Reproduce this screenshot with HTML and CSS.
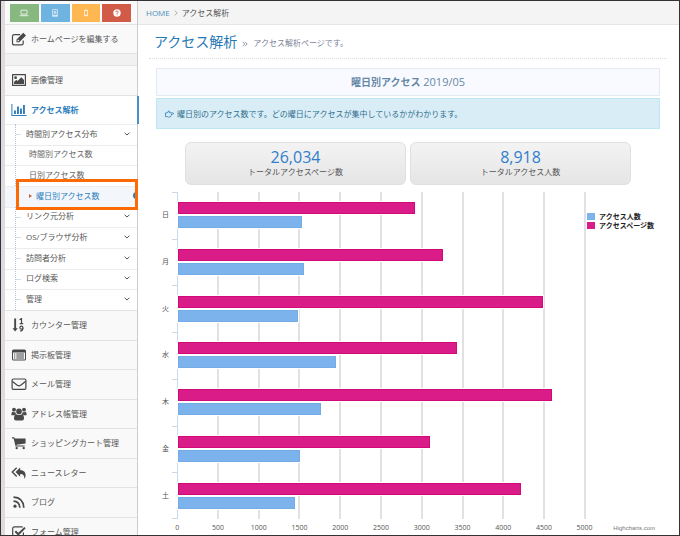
FILE: index.html
```html
<!DOCTYPE html>
<html lang="ja">
<head>
<meta charset="utf-8">
<meta name="viewport" content="width=device-width, initial-scale=1">
<title>アクセス解析</title>
<link rel="stylesheet" href="styles.css">
</head>
<body>
<svg class="defs" aria-hidden="true">
  <symbol id="chevron" viewBox="0 0 6 4"><path d="M.6.8 3 3 5.4.8" fill="none" stroke="currentColor" stroke-width="1"/></symbol>
</svg>
<aside class="sidebar">
  <div class="shortcuts">
    <button class="shortcut green" type="button" aria-label="PC"><svg viewBox="0 0 10 8"><path d="M2 1.2h6v4H2z" fill="none" stroke="currentColor" stroke-width=".9"/><path d="M.6 6.2h8.8v1H.6z"/></svg></button>
    <button class="shortcut blue" type="button" aria-label="タブレット"><svg viewBox="0 0 10 8"><path d="M2.3.9q0-.6.6-.6h4.2q.6 0 .6.6v6.2q0 .6-.6.6H2.9q-.6 0-.6-.6zM3.1 1.1v5h3.8v-5zM4.6 6.5v.7h.8v-.7z" fill-rule="evenodd"/><path d="M3.7 2h2.6v.7H3.7zM3.7 3.3h2.6V4H3.7zM3.7 4.6h2.6v.7H3.7z"/></svg></button>
    <button class="shortcut orange" type="button" aria-label="スマートフォン"><svg viewBox="0 0 10 8"><path d="M3.1 1.4q0-.6.6-.6h2.6q.6 0 .6.6v5.2q0 .6-.6.6H3.7q-.6 0-.6-.6zM3.9 1.9v3.8h2.2V1.9z" fill-rule="evenodd"/></svg></button>
    <button class="shortcut red" type="button" aria-label="ヘルプ"><svg viewBox="0 0 10 8"><circle cx="5" cy="4" r="3.7"/><path class="mark" d="M3.7 3.1Q3.8 2 5 2t1.2 1Q6.200 3.600 5.500 3.900 5 4.200 5 4.800M5 5.300v1" fill="none" stroke-width=".9"/></svg></button>
  </div>
  <nav>
    <ul class="menu menu-edit">
      <li><a href="#"><svg class="icon" viewBox="0 0 16 14"><path d="M12.200 8.400v2.800q0 1.700-1.700 1.700H3.200q-1.700 0-1.700-1.700V4.400q0-1.700 1.700-1.700h6" fill="none" stroke="currentColor" stroke-width="1.200"/><path d="M12.300.8 15 3.500 8.200 10.300H5.500V7.600zM6.500 8v1.300h1.200l.6-.6L7.100 7.400z" fill-rule="evenodd"/></svg>ホームページを編集する</a></li>
    </ul>
    <ul class="menu menu-main">
      <li><a href="#"><svg class="icon" viewBox="0 0 16 14"><path d="M1.600 1.600h12.800v10.800H1.600z" fill="none" stroke="currentColor" stroke-width="1.200" stroke-linejoin="round"/><circle cx="4.600" cy="4.700" r="1.400"/><path d="M3 11V9l2.300-2.300 1.300 1.300 3.700-3.800L13 7v4z"/></svg>画像管理</a></li>
      <li class="current"><a href="#"><svg class="icon" viewBox="0 0 16 14"><path d="M.4 1h1v11h14.200v1H.4zM3 7.500h1.900V11H3zM6 3.500h1.900V11H6zM9 5.500h1.900V11H9zM12 2h1.900v9H12z"/></svg>アクセス解析</a></li>
    </ul>
    <ul class="submenu">
      <li class="branch"><a href="#">時間別アクセス分布<svg class="chevron"><use href="#chevron"/></svg></a></li>
      <li class="leaf"><a href="#">時間別アクセス数</a></li>
      <li class="leaf"><a href="#">日別アクセス数</a></li>
      <li class="leaf selected"><a href="#" aria-current="page">曜日別アクセス数</a></li>
      <li class="branch"><a href="#">リンク元分析<svg class="chevron"><use href="#chevron"/></svg></a></li>
      <li class="branch"><a href="#">OS/ブラウザ分析<svg class="chevron"><use href="#chevron"/></svg></a></li>
      <li class="branch"><a href="#">訪問者分析<svg class="chevron"><use href="#chevron"/></svg></a></li>
      <li class="branch"><a href="#">ログ検索<svg class="chevron"><use href="#chevron"/></svg></a></li>
      <li class="branch"><a href="#">管理<svg class="chevron"><use href="#chevron"/></svg></a></li>
    </ul>
    <ul class="menu menu-tools">
      <li><a href="#"><svg class="icon" viewBox="0 0 16 14"><path d="M3.200.4h1.900v9.800h1.700L4.150 13.400 1.500 10.200h1.700z"/><path d="M8.600 1.700 10.300.6h.2v5M8.700 5.600h3.500" fill="none" stroke="currentColor" stroke-width="1.200"/><circle cx="10.400" cy="9.700" r="1.500" fill="none" stroke="currentColor" stroke-width="1.200"/><path d="M11.900 9.700q.1 3.200-2.900 3.300" fill="none" stroke="currentColor" stroke-width="1.200"/></svg>カウンター管理</a></li>
      <li><a href="#"><svg class="icon" viewBox="0 0 16 14"><path d="M2.500 1.500h11q1.500 0 1.500 1.500v8q0 1.500-1.500 1.500h-11Q1 12.500 1 11V3q0-1.500 1.500-1.500zM2 4.500V11q0 .5.5.5h11q.5 0 .5-.5V4.500zM3 5.500h1.300v1H3zM3 7.500h1.300v1H3zM3 9.500h1.300v1H3zM5.300 5.500H13v1H5.300zM5.300 7.500H13v1H5.300zM5.300 9.500H13v1H5.300z" fill-rule="evenodd"/></svg>掲示板管理</a></li>
      <li><a href="#"><svg class="icon" viewBox="0 0 16 14"><rect x="1.100" y="2" width="13.800" height="10.400" rx="1.300" fill="none" stroke="currentColor" stroke-width="1.200"/><path d="M1.300 4.200Q4 6.500 6.300 8.200q1.700 1.200 3.400 0Q12 6.500 14.700 4.200" fill="none" stroke="currentColor" stroke-width="1.200"/></svg>メール管理</a></li>
      <li><a href="#"><svg class="icon" viewBox="0 0 16 14"><circle cx="3" cy="2.700" r="1.900"/><circle cx="13" cy="2.700" r="1.900"/><circle cx="8" cy="4.400" r="2.800"/><path d="M.4 7.700q0-3 1.500-3 1.100.8 2.400.4.100 1.400.9 2.200-1.200 0-1.900.9H1.400Q.4 8.200.4 7.700zM15.600 7.700q0-3-1.500-3-1.100.8-2.400.4-.1 1.400-.9 2.200 1.200 0 1.900.9h1.900q1 0 1-.5zM3 11.600Q3 7.400 5.400 7.200 8 9 10.600 7.200 13 7.400 13 11.600q0 1.900-1.900 1.900H4.900Q3 13.500 3 11.600z"/></svg>アドレス帳管理</a></li>
      <li><a href="#"><svg class="icon" viewBox="0 0 16 14"><path d="M1 1.300h2.300l.5 1.300H14.600v5L5.500 8.700l.1.800h8.100v1.100H4.600L4.300 9.200 2.600 2.500H1z"/><circle cx="5.700" cy="12.100" r="1.200"/><circle cx="12.700" cy="12.100" r="1.200"/></svg>ショッピングカート管理</a></li>
      <li><a href="#"><svg class="icon" viewBox="0 0 16 14"><path d="M9.200 1.500v2.600q5.400.3 5.400 5.300 0 1.800-1.300 3.600.5-4.900-4.100-5v2.700L4.500 6.100z"/><path d="M5.700 1.700 1.300 6.100l4.400 4.400" fill="none" stroke="currentColor" stroke-width="1.400"/></svg>ニュースレター</a></li>
      <li><a href="#"><svg class="icon" viewBox="0 0 16 14"><circle cx="4" cy="11.200" r="1.600"/><path d="M2.500 6.200q5.900.2 6.400 6.500M2.500 2.200q9.700.4 10.300 10.500" fill="none" stroke="currentColor" stroke-width="1.700"/></svg>ブログ</a></li>
      <li><a href="#"><svg class="icon" viewBox="0 0 16 14"><path d="M12.400 7.500v3.700q0 1.700-1.700 1.700H3.400q-1.700 0-1.700-1.700V3.600q0-1.700 1.700-1.700h7.300q.6 0 1 .2" fill="none" stroke="currentColor" stroke-width="1.200"/><path d="m4.300 6.300 3 3 6.700-6.700" fill="none" stroke="currentColor" stroke-width="2"/></svg>フォーム管理</a></li>
    </ul>
  </nav>
</aside>
<main class="main">
  <nav class="breadcrumb" aria-label="パンくず">
    <a href="#">HOME</a>
    <svg class="crumb-arrow" viewBox="0 0 4 6"><path d="M.8.600 3.200 3 .8 5.400" fill="none" stroke="currentColor" stroke-width=".8"/></svg>
    <span>アクセス解析</span>
  </nav>
  <header class="page-header">
    <h1>アクセス解析</h1>
    <svg class="title-arrow" viewBox="0 0 6 6"><path d="M.6.800 2.800 3 .6 5.200M3 .800 5.200 3 3 5.200" fill="none" stroke="currentColor" stroke-width=".9"/></svg>
    <small>アクセス解析ページです。</small>
  </header>
  <div class="content">
    <h2 class="panel-title"><b>曜日別アクセス</b> 2019/05</h2>
    <p class="notice"><svg class="hand" viewBox="0 0 9 8"><path d="M.5 2.900h1.600q.9-.3 1.300-1.900.9-.5 1.100.4.100.7-.3 1.400H7.700q.8.100.8.700t-.8.700H6.300q.5 1.200-.4 1.500 0 1.100-.9 1.300H3.400L2.100 6.600H.5z" fill="none" stroke="currentColor" stroke-width=".8" stroke-linejoin="round"/></svg>曜日別のアクセス数です。どの曜日にアクセスが集中しているかがわかります。</p>
    <div class="stats">
      <div class="stat"><strong>26,034</strong><span>トータルアクセスページ数</span></div>
      <div class="stat"><strong>8,918</strong><span>トータルアクセス人数</span></div>
    </div>
    <section class="chart" aria-label="曜日別アクセス">
      <div class="days">
        <span>日</span><span>月</span><span>火</span><span>水</span><span>木</span><span>金</span><span>土</span>
      </div>
      <div class="plot">
        <div class="gridlines"><i></i><i></i><i></i><i></i><i></i><i></i><i></i><i></i><i></i><i></i></div>
        <div class="day"><div class="bar pages" style="width:58.2%"></div><div class="bar people" style="width:30.5%"></div></div>
        <div class="day"><div class="bar pages" style="width:65%"></div><div class="bar people" style="width:30.9%"></div></div>
        <div class="day"><div class="bar pages" style="width:89.7%"></div><div class="bar people" style="width:29.5%"></div></div>
        <div class="day"><div class="bar pages" style="width:68.5%"></div><div class="bar people" style="width:38.8%"></div></div>
        <div class="day"><div class="bar pages" style="width:92%"></div><div class="bar people" style="width:35.2%"></div></div>
        <div class="day"><div class="bar pages" style="width:62%"></div><div class="bar people" style="width:30%"></div></div>
        <div class="day"><div class="bar pages" style="width:84.2%"></div><div class="bar people" style="width:28.8%"></div></div>
      </div>
      <ul class="legend">
        <li class="people">アクセス人数</li>
        <li class="pages">アクセスページ数</li>
      </ul>
      <div class="scale">
        <span>0</span><span>500</span><span>1000</span><span>1500</span><span>2000</span><span>2500</span><span>3000</span><span>3500</span><span>4000</span><span>4500</span><span>5000</span>
      </div>
      <a class="credit" href="#">Highcharts.com</a>
    </section>
  </div>
</main>
</body>
</html>
```
FILE: styles.css
```css
* {
  box-sizing: border-box;
}

body {
  display: flex;
  height: 100vh;
  margin: 0;
  overflow: hidden;
  border: 1px solid #343234;
  background: #fff;
  color: #555;
  font: 8px/12px "Open Sans", "Noto Sans CJK JP", sans-serif;
}

ul {
  margin: 0;
  padding: 0;
  list-style: none;
}

a {
  color: inherit;
  text-decoration: none;
}

svg {
  flex: none;
  fill: currentColor;
}

.defs {
  position: absolute;
  width: 0;
  height: 0;
}

/* Sidebar */

.sidebar {
  flex: 0 0 137px;
  border-left: 4px solid #dedadd;
  border-right: 1px solid #ccc;
  background: #f1f1f1;
}

.shortcuts {
  display: flex;
  gap: 2px;
  padding: 3px 6px 2px 5px;
  background: #fafafa;
}

.shortcut {
  display: flex;
  flex: 1;
  align-items: center;
  justify-content: center;
  height: 18px;
  padding: 0;
  border: 0;
  color: #fff;
}

.shortcut svg {
  width: 10px;
  height: 8px;
  opacity: 0.8;
}

.green { background: #87b87f; }
.blue { background: #6fb3e0; }
.orange { background: #ffb752; }
.red { background: #d15b47; }

.shortcut.red svg {
  opacity: 1;
}

.mark {
  stroke: #d15b47;
}

.menu,
.submenu {
  display: grid;
  grid-auto-rows: 1fr;
}

.menu-edit {
  height: 30px;
  margin-bottom: 11px;
}

.menu-main {
  height: 59px;
}

.menu-tools {
  height: 236px;
}

.menu li {
  position: relative;
  border-top: 1px solid #e3e3e3;
  background: #f9f9f9;
}

.menu-edit li {
  border-bottom: 1px solid #e3e3e3;
}

.menu a {
  display: flex;
  align-items: center;
  gap: 4px;
  height: 100%;
  padding-left: 6px;
}

.icon {
  width: 16px;
  height: 14px;
  color: #484848;
}

.menu .current {
  background: #fff;
  color: #2b7dbc;
  font-weight: 700;
}

.current .icon {
  color: inherit;
}

.current::after {
  position: absolute;
  top: 0;
  right: -2px;
  bottom: 0;
  width: 2px;
  background: #4490c8;
  content: "";
}

.submenu {
  position: relative;
  height: 186px;
  background: #fff;
}

.submenu::before {
  position: absolute;
  z-index: 1;
  top: 0;
  bottom: 0;
  left: 10px;
  border-left: 1px dotted #a9c8df;
  content: "";
}

.submenu li {
  position: relative;
  border-top: 1px solid #ececec;
}

.submenu a {
  display: flex;
  align-items: center;
  justify-content: space-between;
  height: 100%;
  padding: 0 7px 2px 21px;
}

.branch::before {
  position: absolute;
  top: 9px;
  left: 11px;
  width: 5px;
  border-top: 1px solid #cfdfea;
  content: "";
}

.submenu .leaf a {
  padding-left: 24px;
  color: #666;
}

.submenu .selected {
  z-index: 2;
  background: #f3f7fc;
}

.submenu .selected a {
  justify-content: flex-start;
  gap: 4px;
  color: #2b7dbc;
}

.selected a::before {
  border: 2px solid transparent;
  border-left: 3px solid #c86139;
  border-right: 0;
  content: "";
}

.selected a::after {
  position: absolute;
  top: 5px;
  right: 0;
  width: 4px;
  height: 7px;
  border-radius: 4px 0 0 4px;
  background: #2b7dbc;
  content: "";
}

.selected::after {
  position: absolute;
  inset: -8px -1px -3px 11px;
  border: 3px solid #fb6a04;
  content: "";
}

.chevron {
  width: 6px;
  height: 4px;
}

/* Main column */

.main {
  flex: 1;
  min-width: 0;
}

.breadcrumb {
  display: flex;
  align-items: center;
  gap: 4px;
  height: 24px;
  padding-left: 8px;
  border-bottom: 1px solid #e5e5e5;
  background: #f4f4f4;
}

.breadcrumb a {
  color: #4c8fbd;
}

.crumb-arrow {
  width: 4px;
  height: 6px;
  color: #999;
}

.page-header {
  display: flex;
  align-items: center;
  gap: 5px;
  height: 34px;
  margin: 0 12px 0 11px;
  padding-left: 5px;
  border-bottom: 1px dotted #ddd;
}

.page-header h1 {
  margin: 0;
  color: #2679b5;
  font-size: 14px;
  font-weight: 400;
  line-height: 20px;
}

.page-header small {
  padding-top: 3px;
  color: #7b8297;
  font-size: 8px;
}

.title-arrow {
  width: 6px;
  height: 6px;
  margin-top: 4px;
  color: #8089a0;
}

.content {
  padding: 9px 19px 0 18px;
}

.panel-title {
  margin: 0;
  padding: 5px;
  border: 1px solid #e3eaf2;
  background: #f9faff;
  color: #6688a6;
  font-size: 11px;
  font-weight: 400;
  line-height: 15px;
  text-align: center;
}

.panel-title b {
  font-size: 10px;
}

.notice {
  display: flex;
  align-items: center;
  gap: 3px;
  height: 31px;
  margin: 2px 0 0;
  padding: 0 8px;
  border: 1px solid #bce8f1;
  background: #d9edf7;
  color: #31708f;
}

.hand {
  width: 9px;
  height: 8px;
  color: #2b7dbc;
}

.stats {
  display: grid;
  grid-template-columns: 1fr 1fr;
  gap: 4px;
  margin: 13px 29px 0;
}

.stat {
  display: flex;
  flex-direction: column;
  align-items: center;
  height: 43px;
  padding-top: 5px;
  border: 1px solid #e0e0e0;
  border-radius: 6px;
  background: linear-gradient(#f3f3f3, #e5e5e5);
}

.stat strong {
  color: #307ecc;
  font-size: 16px;
  font-weight: 400;
  line-height: 18px;
}

/* Chart */

.chart {
  display: grid;
  grid-template-columns: 21px 1fr 75px;
  margin-top: 7px;
}

.days,
.plot {
  display: grid;
  grid-auto-rows: 1fr;
  height: 327px;
}

.days span {
  position: relative;
  display: flex;
  align-items: center;
  padding-left: 6px;
  font-size: 7px;
}

.days span::before,
.days span:last-child::after {
  position: absolute;
  top: 0;
  right: 0;
  width: 5px;
  border-top: 1px solid #ccd9e8;
  content: "";
}

.days span:last-child::after {
  top: auto;
  bottom: 0;
}

.plot {
  position: relative;
  border-left: 1px solid #ccd9e8;
}

.gridlines {
  position: absolute;
  inset: 0 -1px 0 0;
  display: grid;
  grid-template-columns: repeat(10, 1fr);
}

.gridlines i {
  border-right: 2px solid #e1e1e1;
}

.day {
  position: relative;
  display: flex;
  flex-direction: column;
  justify-content: center;
  gap: 2px;
}

.bar {
  height: 12px;
  box-shadow: 0 0 0 1px #fff;
}

.bar.pages {
  border: 1px solid #d20a79;
  background: #d91c87;
}

.bar.people {
  border: 1px solid #73ace6;
  background: #7cb3ec;
}

.legend {
  padding: 20px 0 0 2px;
  color: #222;
  font-size: 7px;
  font-weight: 700;
  line-height: 9px;
}

.legend li {
  display: flex;
  align-items: center;
  gap: 4px;
  white-space: nowrap;
}

.legend li::before {
  width: 8px;
  height: 7px;
  content: "";
}

.legend .people::before {
  background: #7cb3ec;
}

.legend .pages::before {
  background: #d91c87;
}

.scale {
  display: grid;
  grid-column: 2;
  grid-template-columns: repeat(11, 1fr);
  margin: 4px -20px 0;
  font-size: 7px;
  line-height: 10px;
  text-align: center;
}

.credit {
  margin-top: 4px;
  padding-right: 5px;
  color: #777;
  font: 6px/10px "Liberation Sans", sans-serif;
  text-align: right;
}
```
